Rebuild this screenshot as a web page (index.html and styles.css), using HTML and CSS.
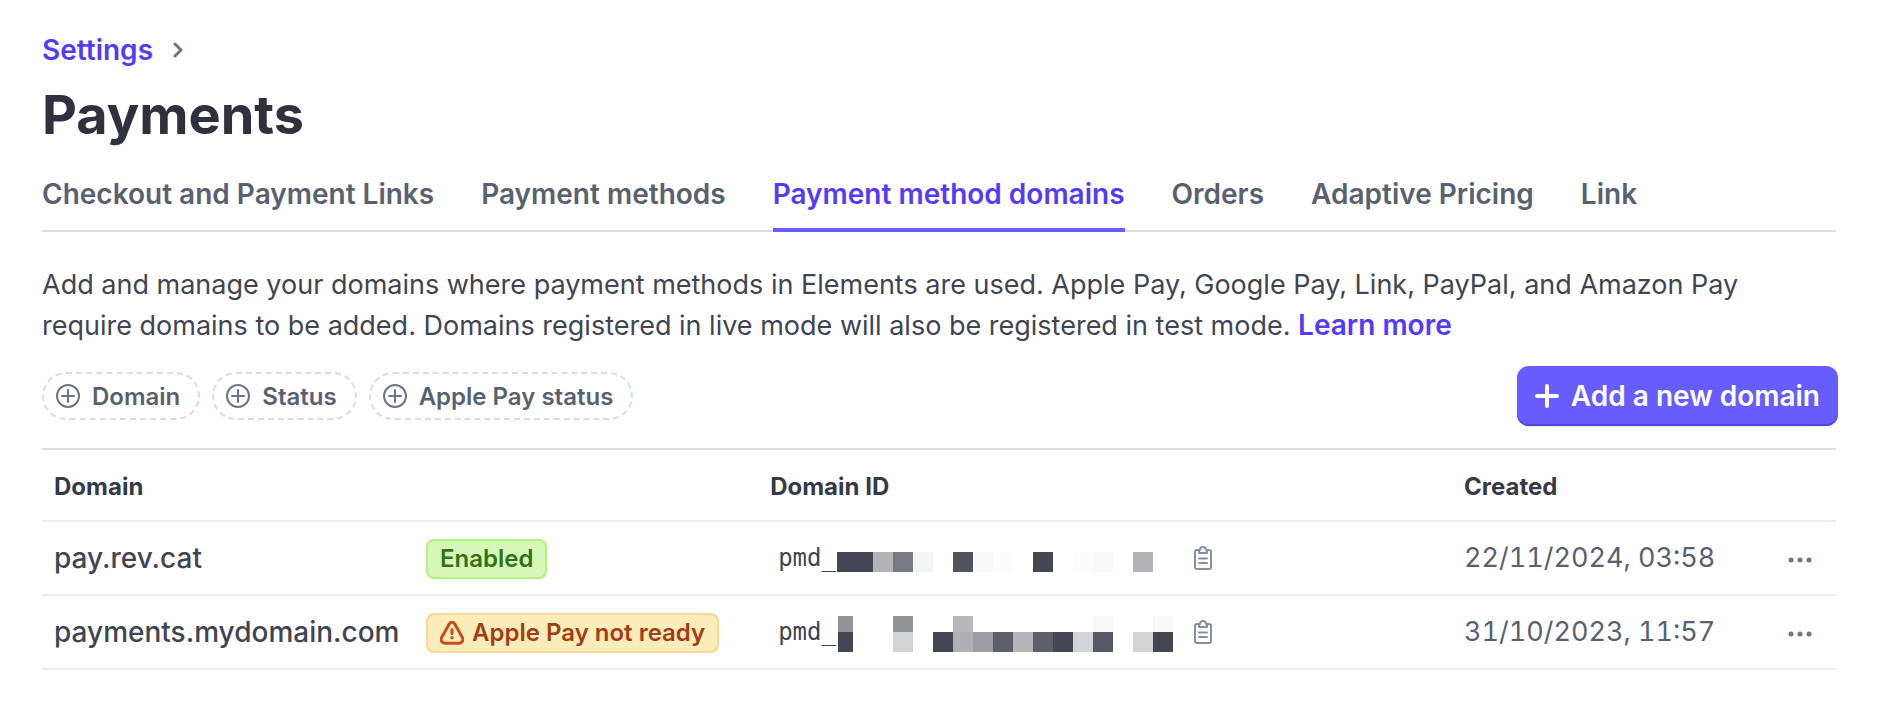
FILE: index.html
```html
<!DOCTYPE html>
<html lang="en">
<head>
<meta charset="utf-8">
<title>Payments</title>
<link rel="stylesheet" href="styles.css">
</head>
<body>
<main class="page">
  <nav class="breadcrumb" aria-label="Breadcrumb">
    <a class="link" href="#">Settings</a>
    <svg class="chevron" width="10" height="16" viewBox="0 0 10 16" aria-hidden="true"><path d="M2 2l6 6-6 6"/></svg>
  </nav>
  <h1 class="title">Payments</h1>
  <nav class="tabs" aria-label="Payment settings">
    <a class="tab" href="#">Checkout and Payment Links</a>
    <a class="tab" href="#">Payment methods</a>
    <a class="tab tab-active" href="#" aria-current="page">Payment method domains</a>
    <a class="tab" href="#">Orders</a>
    <a class="tab" href="#">Adaptive Pricing</a>
    <a class="tab" href="#">Link</a>
  </nav>
  <p class="intro">Add and manage your domains where payment methods in Elements are used. Apple Pay, Google Pay, Link, PayPal, and Amazon Pay require domains to be added. Domains registered in live mode will also be registered in test mode. <a class="link" href="#">Learn more</a></p>
  <div class="toolbar">
    <div class="filters">
      <button class="chip" type="button"><svg class="chip-icon" width="24" height="24" viewBox="0 0 24 24" aria-hidden="true"><circle cx="12" cy="12" r="11"/><path d="M12 6v12M6 12h12"/></svg>Domain</button>
      <button class="chip" type="button"><svg class="chip-icon" width="24" height="24" viewBox="0 0 24 24" aria-hidden="true"><circle cx="12" cy="12" r="11"/><path d="M12 6v12M6 12h12"/></svg>Status</button>
      <button class="chip" type="button"><svg class="chip-icon" width="24" height="24" viewBox="0 0 24 24" aria-hidden="true"><circle cx="12" cy="12" r="11"/><path d="M12 6v12M6 12h12"/></svg>Apple Pay status</button>
    </div>
    <button class="add" type="button"><svg class="add-icon" width="24" height="24" viewBox="0 0 24 24" aria-hidden="true"><path d="M12 2v20M2 12h20"/></svg>Add a new domain</button>
  </div>
  <table class="domains">
    <colgroup><col class="col-name"><col class="col-status"><col class="col-id"><col><col class="col-actions"></colgroup>
    <thead>
      <tr><th scope="col" colspan="2">Domain</th><th scope="col">Domain ID</th><th scope="col">Created</th><td></td></tr>
    </thead>
    <tbody>
      <tr>
        <td class="name">pay.rev.cat</td>
        <td><span class="badge badge-ok">Enabled</span></td>
        <td>
          <div class="id"><span>pmd_</span><svg class="mosaic" width="336" height="40" viewBox="0 0 336 40" shape-rendering="crispEdges" aria-hidden="true"><path fill="#444653" d="M0 14h36v20H0zM196 14h20v20h-20z"/><path fill="#b2b2b7" d="M36 14h20v20H36zM296 14h20v20h-20z"/><path fill="#777a82" d="M56 14h20v20H56z"/><path fill="#f3f5f5" d="M76 14h20v20H76z"/><path fill="#51545e" d="M116 14h20v20h-20z"/><path fill="#f9f9fa" d="M136 14h20v20h-20zM256 14h20v20h-20z"/><path fill="#fcfcfc" d="M156 14h20v20h-20zM236 14h20v20h-20z"/></svg>
          <button class="icon-button" type="button" aria-label="Copy domain ID"><svg class="clipboard" width="18" height="24" viewBox="0 0 18 24" aria-hidden="true"><path d="M5 4H3a2 2 0 0 0-2 2v15a2 2 0 0 0 2 2h12a2 2 0 0 0 2-2V6a2 2 0 0 0-2-2h-2M5 7V5a1 1 0 0 1 1-1 3 3 0 0 1 6 0 1 1 0 0 1 1 1v2zM5 12.500h8M5 17h8"/></svg></button></div>
        </td>
        <td class="date">22/11/2024, 03:58</td>
        <td class="actions"><button class="icon-button" type="button" aria-label="More actions"><svg class="dots" width="24" height="6" viewBox="0 0 24 6"><circle cx="3" cy="3" r="2.500"/><circle cx="12" cy="3" r="2.500"/><circle cx="21" cy="3" r="2.500"/></svg></button></td>
      </tr>
      <tr>
        <td class="name">payments.mydomain.com</td>
        <td><span class="badge badge-warn"><svg class="warning" width="24" height="24" viewBox="0 0 24 24" aria-hidden="true"><path d="M9.400 2.800a3 3 0 0 1 5.200 0l7.800 13.800a3.700 3.700 0 0 1-3.200 5.600H4.800a3.700 3.700 0 0 1-3.200-5.600zM12 8.500v4"/><circle cx="12" cy="16.800" r="1.700"/></svg>Apple Pay not ready</span></td>
        <td>
          <div class="id"><span>pmd_</span><svg class="mosaic" width="336" height="40" viewBox="0 0 336 40" shape-rendering="crispEdges" aria-hidden="true"><path fill="#939498" d="M1 4h15v16H1zM56 4h20v16H56z"/><path fill="#b7b8bb" d="M116 4h20v16h-20z"/><path fill="#f9f9fa" d="M256 4h20v16h-20zM316 4h20v16h-20z"/><path fill="#444653" d="M1 20h15v20H1zM96 20h20v20H96zM216 20h20v20h-20zM316 20h20v20h-20z"/><path fill="#d3d4d6" d="M56 20h20v20H56zM236 20h20v20h-20zM296 20h20v20h-20z"/><path fill="#b1afb6" d="M116 20h20v20h-20z"/><path fill="#9d9ea3" d="M136 20h20v20h-20z"/><path fill="#5d606a" d="M156 20h20v20h-20zM196 20h20v20h-20z"/><path fill="#b5b5ba" d="M176 20h20v20h-20z"/><path fill="#565965" d="M256 20h20v20h-20z"/></svg>
          <button class="icon-button" type="button" aria-label="Copy domain ID"><svg class="clipboard" width="18" height="24" viewBox="0 0 18 24" aria-hidden="true"><path d="M5 4H3a2 2 0 0 0-2 2v15a2 2 0 0 0 2 2h12a2 2 0 0 0 2-2V6a2 2 0 0 0-2-2h-2M5 7V5a1 1 0 0 1 1-1 3 3 0 0 1 6 0 1 1 0 0 1 1 1v2zM5 12.500h8M5 17h8"/></svg></button></div>
        </td>
        <td class="date">31/10/2023, 11:57</td>
        <td class="actions"><button class="icon-button" type="button" aria-label="More actions"><svg class="dots" width="24" height="6" viewBox="0 0 24 6"><circle cx="3" cy="3" r="2.500"/><circle cx="12" cy="3" r="2.500"/><circle cx="21" cy="3" r="2.500"/></svg></button></td>
      </tr>
    </tbody>
  </table>
</main>
</body>
</html>
```
FILE: styles.css
```css
* { box-sizing: border-box; }
body {
  margin: 0;
  background: #fff;
  color: #414552;
  font-family: Inter, "Liberation Sans", sans-serif;
  font-size: 27px;
  line-height: 40px;
}
button { font-family: inherit; cursor: pointer; }
a { text-decoration: none; }
svg { flex: none; fill: none; stroke-linecap: round; stroke-linejoin: round; }

.page { padding: 30px 60px 40px 42px; }
.link { color: #533afd; font-size: 28px; font-weight: 600; }

.breadcrumb { display: flex; align-items: center; gap: 20px; }
.chevron { stroke: #6c7688; stroke-width: 3; }
.title { margin: 11px 0 0; color: #30313d; font-size: 54px; font-weight: 700; line-height: 68px; }

.tabs { display: flex; gap: 47px; margin-top: 20px; box-shadow: inset 0 -2px #d8dee4; }
.tab { padding: 5px 0 14px; border-bottom: 4px solid transparent; color: #596171; font-size: 28px; font-weight: 600; white-space: nowrap; }
.tab-active { border-color: #675dff; color: #533afd; }

.intro { margin: 33px 0 0; padding-right: 60px; }

.toolbar { display: flex; align-items: center; justify-content: space-between; margin: 20px -2px 22px 0; }
.filters { display: flex; gap: 12px; }
.chip {
  display: flex; align-items: center; gap: 12px; height: 48px; padding: 0 18px 0 12px;
  border: 2px dashed #d8dee4; border-radius: 24px; background: none;
  color: #596171; font-size: 24px; font-weight: 600;
}
.chip-icon { stroke: #6c7688; stroke-width: 2; }
.add {
  display: flex; align-items: center; gap: 12px; height: 60px; padding: 0 18px;
  border: 0; border-radius: 12px; background: #675dff; color: #fff;
  box-shadow: inset 0 -2px #5148d6, 0 1px 2px #0000001f;
  font-size: 28px; font-weight: 600;
}
.add-icon { stroke: #fff; stroke-width: 4; }

.domains { width: 100%; border-collapse: collapse; table-layout: fixed; border-top: 2px solid #d8dee4; }
.col-name { width: 20.74%; }
.col-status { width: 19.18%; }
.col-id { width: 38.68%; }
.col-actions { width: 72px; }
.domains th, .domains td { height: 74px; padding: 0 12px; border-bottom: 2px solid #ebeef1; text-align: left; vertical-align: middle; white-space: nowrap; }
.domains th { height: 72px; padding-top: 3px; color: #353a44; font-size: 24px; font-weight: 700; }
.domains thead td { height: 72px; }
.domains .name { font-size: 28px; font-weight: 500; }
.domains .date { color: #596171; font-variant-numeric: tabular-nums; }
.domains .actions { padding: 0; text-align: center; }

.badge {
  display: inline-flex; align-items: center; gap: 8px; height: 40px; padding: 0 12px;
  border: 2px solid; border-radius: 8px; font-size: 24px; font-weight: 600; vertical-align: middle;
}
.badge-ok { border-color: #b4f080; background: #d7f7b9; color: #347217; }
.badge-warn { border-color: #f5d896; background: #fbedb9; color: #a23d16; }
.warning { stroke: #c84c1c; stroke-width: 3; }
.warning circle { fill: #c84c1c; stroke: none; }

.id { display: flex; align-items: center; padding-left: 8px; font-family: "DejaVu Sans Mono", monospace; font-size: 24px; }
.mosaic { margin-left: 1px; }
.icon-button { display: inline-flex; padding: 8px; border: 0; background: none; vertical-align: middle; }
.id .icon-button { margin-left: 13px; }
.clipboard { stroke: #87909f; stroke-width: 2; }
.dots { fill: #6c7688; }
```
